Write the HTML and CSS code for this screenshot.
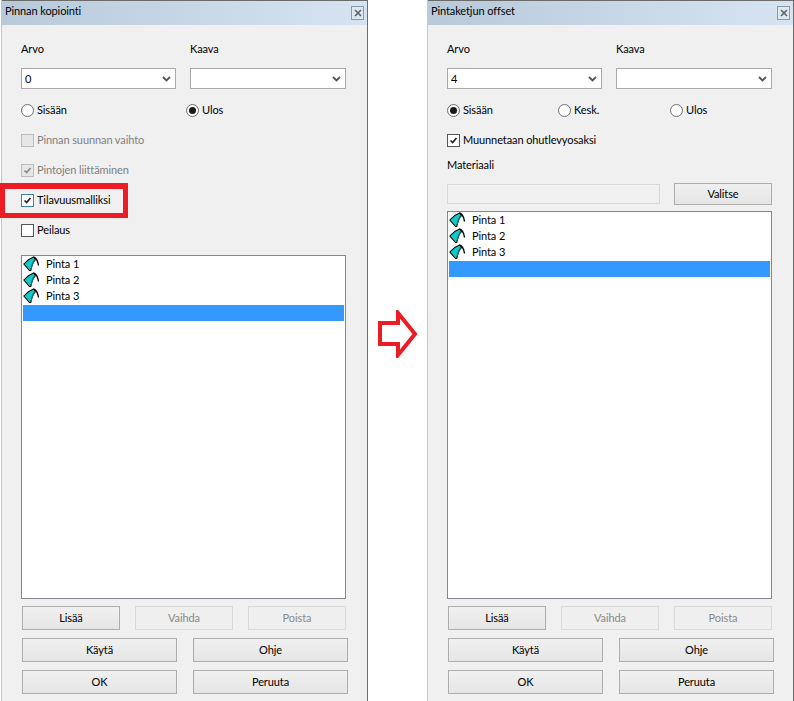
FILE: index.html
```html
<!DOCTYPE html>
<html lang="fi">
<head>
<meta charset="utf-8">
<title>Pinnan kopiointi</title>
<link rel="stylesheet" href="styles.css">
</head>
<body>
<svg width="0" height="0" class="defs">
  <symbol id="face" viewBox="0 0 16 16">
    <path d="M.8 8 Q5 3 10.500 1 L12.500 3.500 Q9.500 6 7.800 14.500 L6.500 14.500 Z" fill="#14c8c8" stroke="#000" stroke-width="1.100" stroke-linejoin="round"/>
    <path d="M10.500 1 Q14.300 2 15.500 9.500" fill="none" stroke="#000" stroke-width="1.400"/>
    <path d="M12.300 3.800 Q9.300 6.500 7.800 13" fill="none" stroke="#0a7f7f" stroke-width="1"/>
  </symbol>
</svg>
<main class="stage">
  <section class="dialog left">
    <header class="titlebar"><span>Pinnan kopiointi</span><button class="close"><svg viewBox="0 0 8 8" width="8" height="8"><path d="M1 1 7 7M7 1 1 7" stroke="#5b6670" stroke-width="1.700"/></svg></button></header>
    <div class="body">
      <div class="labels"><span class="lab-a">Arvo</span><span>Kaava</span></div>
      <div class="combos">
        <div class="combo c1">0<svg class="chev" viewBox="0 0 9 6" width="9" height="6"><path d="M1 1 4.500 4.500 8 1" fill="none" stroke="#555" stroke-width="1.800"/></svg></div>
        <div class="combo c2"><svg class="chev" viewBox="0 0 9 6" width="9" height="6"><path d="M1 1 4.500 4.500 8 1" fill="none" stroke="#555" stroke-width="1.800"/></svg></div>
      </div>
      <div class="radios">
        <label class="radio r-left"><i class="dot"></i>Sisään</label>
        <label class="radio"><i class="dot on"></i>Ulos</label>
      </div>
      <label class="check first dim"><i class="box off"></i>Pinnan suunnan vaihto</label>
      <label class="check gap14 dim"><i class="box off"><svg viewBox="0 0 13 13"><path d="M3 6.500 5.500 9 10 3.500" fill="none" stroke="#8a8a8a" stroke-width="2"/></svg></i>Pintojen liittäminen</label>
      <label class="check gap14 focus"><i class="box blue"><svg viewBox="0 0 13 13"><path d="M3 6.500 5.500 9 10 3.500" fill="none" stroke="#222" stroke-width="2"/></svg></i>Tilavuusmalliksi<b class="redbox"></b></label>
      <label class="check gap14"><i class="box"></i>Peilaus</label>
      <div class="list list-l">
        <div class="row"><svg class="ico"><use href="#face"/></svg>Pinta 1</div>
        <div class="row"><svg class="ico"><use href="#face"/></svg>Pinta 2</div>
        <div class="row"><svg class="ico"><use href="#face"/></svg>Pinta 3</div>
        <div class="row sel"></div>
      </div>
      <div class="btns three"><button class="btn">Lisää</button><button class="btn off">Vaihda</button><button class="btn off">Poista</button></div>
      <div class="btns two"><button class="btn">Käytä</button><button class="btn">Ohje</button></div>
      <div class="btns two"><button class="btn">OK</button><button class="btn">Peruuta</button></div>
    </div>
  </section>
  <div class="arrow">
    <svg viewBox="0 0 40 48" width="40" height="48"><path d="M2 13 H20 V3 L37 24 L20 45 V34 H2 Z" fill="#fff" stroke="#ed1c24" stroke-width="4"/></svg>
  </div>
  <section class="dialog right">
    <header class="titlebar"><span>Pintaketjun offset</span><button class="close"><svg viewBox="0 0 8 8" width="8" height="8"><path d="M1 1 7 7M7 1 1 7" stroke="#5b6670" stroke-width="1.700"/></svg></button></header>
    <div class="body">
      <div class="labels"><span class="lab-a">Arvo</span><span>Kaava</span></div>
      <div class="combos">
        <div class="combo c1">4<svg class="chev" viewBox="0 0 9 6" width="9" height="6"><path d="M1 1 4.500 4.500 8 1" fill="none" stroke="#555" stroke-width="1.800"/></svg></div>
        <div class="combo c2"><svg class="chev" viewBox="0 0 9 6" width="9" height="6"><path d="M1 1 4.500 4.500 8 1" fill="none" stroke="#555" stroke-width="1.800"/></svg></div>
      </div>
      <div class="radios">
        <label class="radio r-3"><i class="dot on"></i>Sisään</label>
        <label class="radio r-3b"><i class="dot"></i>Kesk.</label>
        <label class="radio"><i class="dot"></i>Ulos</label>
      </div>
      <label class="check first"><i class="box"><svg viewBox="0 0 13 13"><path d="M3 6.500 5.500 9 10 3.500" fill="none" stroke="#222" stroke-width="2"/></svg></i>Muunnetaan ohutlevyosaksi</label>
      <div class="material-label">Materiaali</div>
      <div class="material"><div class="field"></div><button class="btn pick">Valitse</button></div>
      <div class="list list-r">
        <div class="row"><svg class="ico"><use href="#face"/></svg>Pinta 1</div>
        <div class="row"><svg class="ico"><use href="#face"/></svg>Pinta 2</div>
        <div class="row"><svg class="ico"><use href="#face"/></svg>Pinta 3</div>
        <div class="row sel"></div>
      </div>
      <div class="btns three"><button class="btn">Lisää</button><button class="btn off">Vaihda</button><button class="btn off">Poista</button></div>
      <div class="btns two"><button class="btn">Käytä</button><button class="btn">Ohje</button></div>
      <div class="btns two"><button class="btn">OK</button><button class="btn">Peruuta</button></div>
    </div>
  </section>
</main>
</body>
</html>
```
FILE: styles.css
```css
* { box-sizing: border-box; }
html, body { margin: 0; height: 100%; background: #fff; overflow: hidden; }
body { font: 11px/16px Lato, "Open Sans", sans-serif; color: #000; letter-spacing: -.1px; }
.defs { position: absolute; }
.stage { display: flex; height: 701px; padding-left: 1px; }
.dialog { width: 367px; height: 701px; padding-top: 1px; background: #f0f0f0; position: relative; box-shadow: inset 0 1px 0 #6b6b6b; flex: none; }
.left { border-left: 1px solid #c4c4c4; border-right: 1px solid #6d6d6d; }
.right { border-left: 1px solid #c8c8c8; border-right: 1px solid #6d6d6d; }
.arrow { width: 59px; flex: none; padding: 310px 0 0 10px; }
.arrow svg { display: block; }
.titlebar { height: 24px; display: flex; align-items: center; justify-content: space-between; padding: 0 3px 5px 3px; background: linear-gradient(90deg, #b8c9da, #d6e4f2); }
.close { width: 13px; height: 14px; padding: 0; margin: 5px 0 0; border: 1px solid #8a99a8; background: #dfe7ef; display: flex; align-items: center; justify-content: center; }
.body { padding: 16px 0 0 19px; }
.labels { display: flex; height: 16px; }
.lab-a { width: 169px; }
.combos { display: flex; gap: 14px; margin-top: 11px; }
.combo { height: 21px; background: #fff; border: 1px solid #a9a9a9; padding: 2px 3px; position: relative; }
.c1 { width: 155px; }
.c2 { width: 156px; }
.chev { position: absolute; right: 4px; top: 7px; }
.radios { display: flex; margin-top: 13px; height: 16px; }
.radio, .check { display: flex; align-items: center; height: 16px; }
.r-left { width: 165px; }
.r-3 { width: 111px; }
.r-3b { width: 112px; }
.dot { width: 13px; height: 13px; border-radius: 50%; border: 1px solid #6e6e6e; background: #fff; margin-right: 3px; position: relative; flex: none; }
.dot.on::after { content: ""; position: absolute; left: 2px; top: 2px; width: 7px; height: 7px; border-radius: 50%; background: #1a1a1a; }
.box { width: 13px; height: 13px; border: 1px solid #555; background: #fff; margin-right: 3px; flex: none; display: block; }
.box svg { display: block; width: 11px; height: 11px; }
.box.off { background: #e6e6e6; border-color: #bcbcbc; }
.box.blue { border-color: #3c7fb1; }
.check { position: relative; }
.first { margin-top: 14px; }
.gap14 { margin-top: 14px; }
.dim { color: #808080; }
.redbox { position: absolute; left: -21px; top: -9px; width: 128px; height: 35px; border: 5px solid #ed1c24; border-top-width: 6px; }
.list { width: 325px; background: #fff; border: 1px solid #828790; padding: 0 1px; }
.list-l { height: 344px; margin-top: 17px; }
.list-r { height: 388px; margin-top: 6px; }
.row { height: 16px; display: flex; align-items: center; white-space: nowrap; }
.ico { width: 16px; height: 16px; margin-right: 7px; flex: none; }
.sel { height: 16px; background: #3399ff; margin-top: 1px; width: 321px; }
.btns { display: flex; }
.three { gap: 15px; margin: 7px 0 0 1px; }
.two { gap: 16px; margin: 8px 0 0 1px; }
.btn { height: 24px; padding: 0; border: 1px solid #adadad; background: linear-gradient(#f0f0f0, #e5e5e5); font: inherit; letter-spacing: inherit; color: #000; }
.three .btn { width: 98px; }
.two .btn { width: 155px; }
.btn.off { border-color: #d9d9d9; background: #efefef; color: #8a8a8a; }
.material-label { margin-top: 9px; }
.material { display: flex; align-items: center; margin-top: 10px; gap: 14px; height: 22px; }
.field { width: 213px; height: 20px; border: 1px solid #d9d9d9; background: #f0f0f0; }
.pick { width: 98px; height: 22px; }
```
